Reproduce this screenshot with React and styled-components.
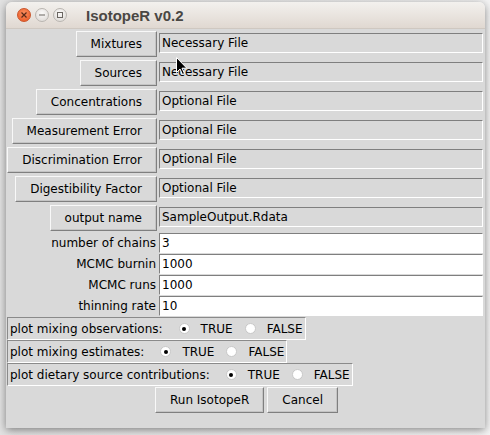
import styled, { createGlobalStyle } from "styled-components";

const GlobalStyle = createGlobalStyle`
	body {
		margin: 0;
		background: #ececec;
		font-family: "DejaVu Sans", sans-serif;
	}
`;

const Desktop = styled.div`
	width: 490px;
	height: 435px;
	position: relative;
	overflow: hidden;
	padding: 2px 0 0 6px;
	box-sizing: border-box;
	background: linear-gradient(to right, #e2e2e2, #f4f4f4);
`;

const Window = styled.div`
	width: 479px;
	height: 426px;
	border-radius: 6px 6px 0 0;
	overflow: hidden;
	display: flex;
	flex-direction: column;
	box-shadow: 0 2px 8px rgba(0, 0, 0, 0.45);
	position: relative;
`;

const TitleBar = styled.div`
	height: 26px;
	flex: none;
	display: flex;
	align-items: center;
	padding-left: 11px;
	background: linear-gradient(#f3f1ee, #e0d8d1);
	border-bottom: 1px solid #cfc8c1;
`;

const WinButton = styled.div`
	width: 14px;
	height: 14px;
	border-radius: 50%;
	margin-right: 4px;
	display: flex;
	align-items: center;
	justify-content: center;
	box-sizing: border-box;
	border: 1px solid ${(p) => (p.close ? "#c9542a" : "#b9b5b0")};
	background: ${(p) =>
		p.close
			? "radial-gradient(circle at 50% 35%, #fa8f5f, #e9541f)"
			: "radial-gradient(circle at 50% 35%, #fbfaf9, #dad6d2)"};
`;

const Title = styled.div`
	margin-left: 15px;
	font-family: "Liberation Sans", sans-serif;
	font-weight: bold;
	font-size: 15px;
	color: #4a4744;
`;

const Content = styled.div`
	flex: 1;
	background: #d9d9d9;
	display: flex;
	flex-direction: column;
	padding-top: 1px;
	font-size: 12px;
	color: #000;
`;

const Grid = styled.div`
	display: grid;
	grid-template-columns: 152px 324px;
	column-gap: 1px;
	grid-auto-rows: ${(p) => p.rowHeight}px;
`;

const TkButton = styled.button`
	font-family: "DejaVu Sans", sans-serif;
	font-size: 12px;
	color: #000;
	background: #d9d9d9;
	height: ${(p) => p.height || 26}px;
	padding: 0 14px;
	border: 1px solid;
	border-color: #f8f8f8 #7f7f7f #7f7f7f #f8f8f8;
	box-shadow: inset -1px -1px 0 #c4c4c4;
	cursor: default;
	white-space: nowrap;
`;

const GridButton = styled(TkButton)`
	justify-self: end;
	align-self: start;
	margin-top: 1px;
	margin-right: 1px;
`;

const Field = styled.div`
	height: 20px;
	box-sizing: border-box;
	align-self: start;
	margin-top: ${(p) => (p.white ? 0 : 3)}px;
	border: 1px solid;
	border-color: #7f7f7f #ffffff #ffffff #7f7f7f;
	background: ${(p) => (p.white ? "#ffffff" : "#d9d9d9")};
	padding-left: 2px;
	display: flex;
	align-items: center;
	font-size: 12px;
	white-space: nowrap;
`;

const Label = styled.div`
	justify-self: end;
	padding-right: 2px;
	height: 20px;
	display: flex;
	align-items: center;
	font-size: 12px;
	white-space: nowrap;
`;

const RadioFrame = styled.div`
	align-self: flex-start;
	margin-left: 1px;
	height: 23px;
	box-sizing: border-box;
	display: flex;
	align-items: center;
	border: 1px solid;
	border-color: #8a8a8a #ffffff #ffffff #8a8a8a;
	padding: 0 2px 0 2px;
	font-size: 12px;
	white-space: nowrap;
`;

const RadioLabel = styled.span`
	margin-right: 16px;
`;

const RadioOption = styled.span`
	display: flex;
	align-items: center;
	margin-left: ${(p) => p.gap}px;
`;

const RadioDot = styled.span`
	width: 11px;
	height: 11px;
	border-radius: 50%;
	box-sizing: border-box;
	background: #ffffff;
	border: 1px solid #c8c8c8;
	display: flex;
	align-items: center;
	justify-content: center;
	margin-right: 11px;

	&::after {
		content: "";
		width: 4px;
		height: 4px;
		border-radius: 50%;
		background: ${(p) => (p.checked ? "#000" : "transparent")};
	}
`;

const ButtonRow = styled.div`
	display: flex;
	justify-content: center;
	gap: 3px;
	margin-top: 1px;
	margin-left: 2px;
`;

const Cursor = styled.svg`
	position: absolute;
	left: 170px;
	top: 55px;
`;

const fileRows = [
	["Mixtures", "Necessary File"],
	["Sources", "Necessary File"],
	["Concentrations", "Optional File"],
	["Measurement Error", "Optional File"],
	["Discrimination Error", "Optional File"],
	["Digestibility Factor", "Optional File"],
	["output name", "SampleOutput.Rdata"],
];

const numberRows = [
	["number of chains", "3"],
	["MCMC burnin", "1000"],
	["MCMC runs", "1000"],
	["thinning rate", "10"],
];

const plotRows = [
	"plot mixing observations:",
	"plot mixing estimates:",
	"plot dietary source contributions:",
];

const Radio = ({ text, checked, gap }) => (
	<RadioOption gap={gap}>
		<RadioDot checked={checked} />
		{text}
	</RadioOption>
);

const App = () => {
	return (
		<Desktop>
			<GlobalStyle />
			<Window>
				<TitleBar>
					<WinButton close>
						<svg width="8" height="8" viewBox="0 0 8 8">
							<path d="M1.5 1.5 L6.5 6.5 M6.5 1.5 L1.5 6.5" stroke="#5a2a18" strokeWidth="1.2" />
						</svg>
					</WinButton>
					<WinButton>
						<svg width="8" height="8" viewBox="0 0 8 8">
							<path d="M1 4 H7" stroke="#6a6661" strokeWidth="1.2" />
						</svg>
					</WinButton>
					<WinButton>
						<svg width="8" height="8" viewBox="0 0 8 8">
							<rect x="1.5" y="1.5" width="5" height="5" fill="none" stroke="#6a6661" strokeWidth="1" />
						</svg>
					</WinButton>
					<Title>IsotopeR v0.2</Title>
				</TitleBar>
				<Content>
					<Grid rowHeight={29}>
						{fileRows.map(([btn, value]) => (
							<>
								<GridButton key={btn}>{btn}</GridButton>
								<Field key={btn + "f"}>{value}</Field>
							</>
						))}
					</Grid>
					<Grid rowHeight={21}>
						{numberRows.map(([label, value]) => (
							<>
								<Label key={label}>{label}</Label>
								<Field key={label + "f"} white>
									{value}
								</Field>
							</>
						))}
					</Grid>
					{plotRows.map((label) => (
						<RadioFrame key={label}>
							<RadioLabel>{label}</RadioLabel>
							<Radio text="TRUE" checked gap={0} />
							<Radio text="FALSE" gap={12} />
						</RadioFrame>
					))}
					<ButtonRow>
						<TkButton height={26}>Run IsotopeR</TkButton>
						<TkButton height={26}>Cancel</TkButton>
					</ButtonRow>
				</Content>
				<Cursor width="12" height="19" viewBox="0 0 12 19">
					<path d="M0.5 0.5 V15.5 L4 12 L6.5 17.5 L8.5 16.5 L6 11.2 H10.8 Z" fill="#000" stroke="#fff" strokeWidth="1" />
				</Cursor>
			</Window>
		</Desktop>
	);
};

export default App;
